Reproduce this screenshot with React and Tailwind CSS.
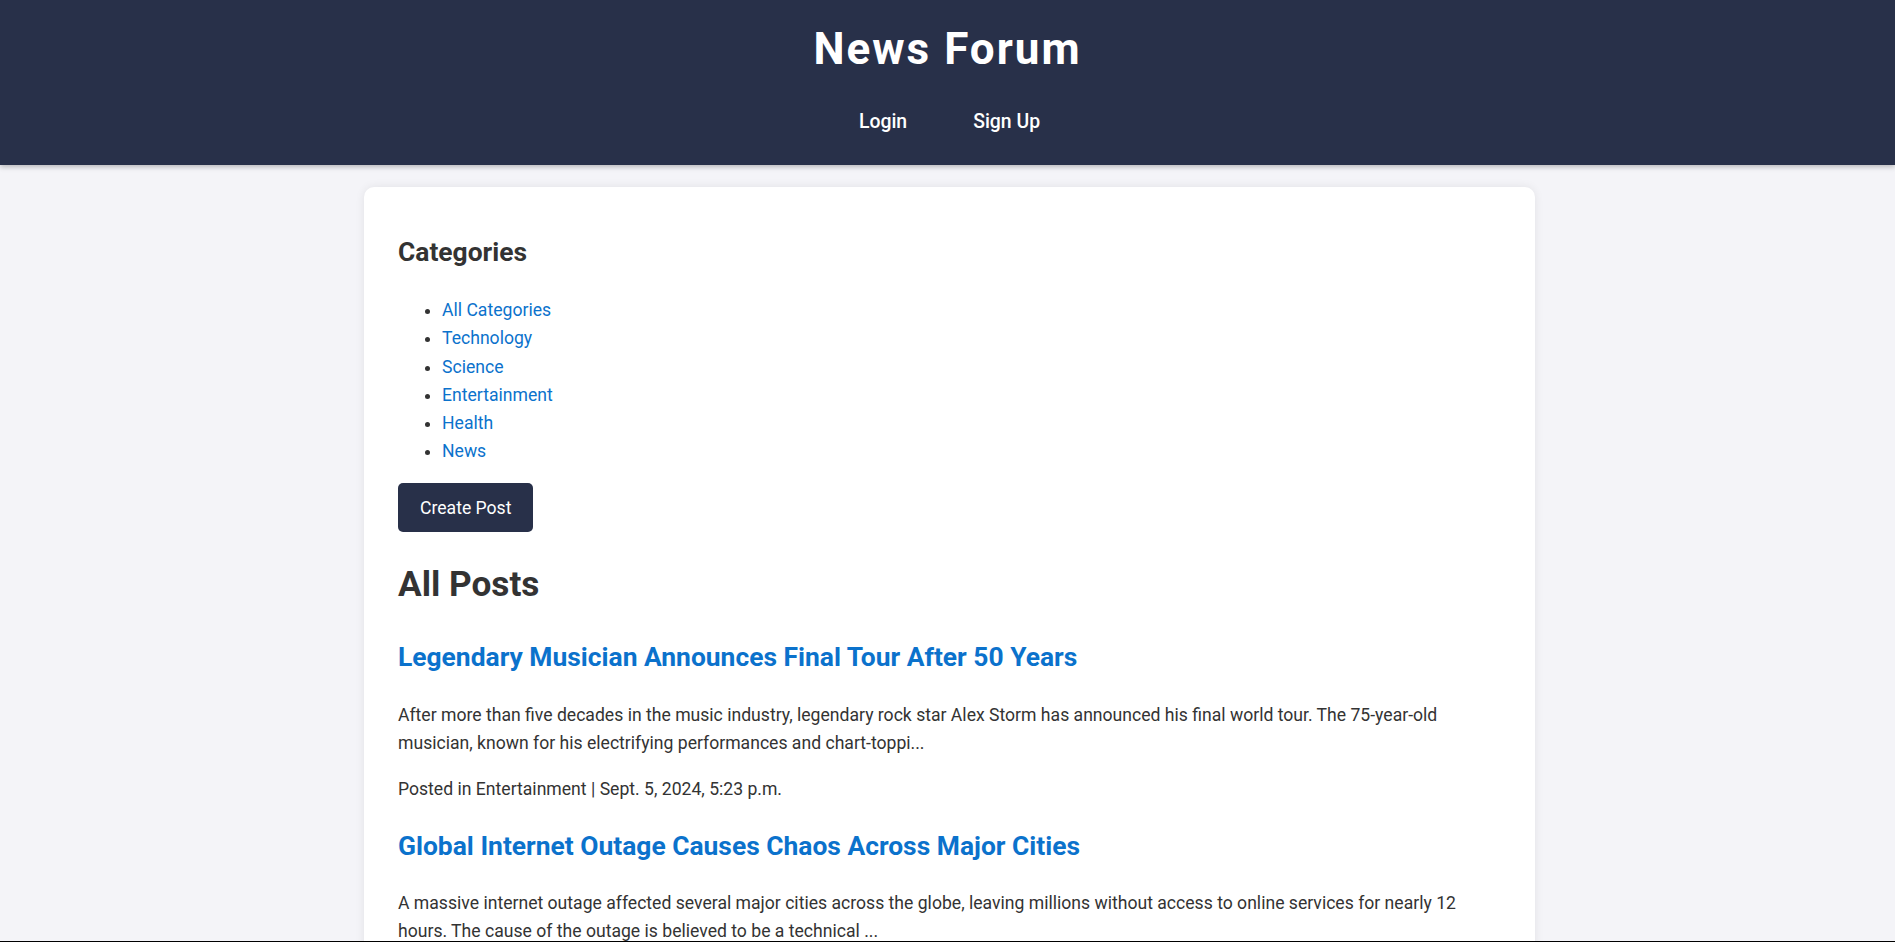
import React from "react";

const categories = ["All Categories", "Technology", "Science", "Entertainment", "Health", "News"];

const posts = [
  {
    title: "Legendary Musician Announces Final Tour After 50 Years",
    excerpt:
      "After more than five decades in the music industry, legendary rock star Alex Storm has announced his final world tour. The 75-year-old musician, known for his electrifying performances and chart-toppi...",
    category: "Entertainment",
    date: "Sept. 5, 2024, 5:23 p.m.",
  },
  {
    title: "Global Internet Outage Causes Chaos Across Major Cities",
    excerpt:
      "A massive internet outage affected several major cities across the globe, leaving millions without access to online services for nearly 12 hours. The cause of the outage is believed to be a technical ...",
    category: "Technology",
    date: "Sept. 5, 2024, 5:20 p.m.",
  },
];

const App = () => {
  return (
    <div className="min-h-screen bg-[#f4f4f8] text-[#333] text-[17.6px] leading-[1.6] font-['Roboto','Liberation_Sans',sans-serif]">
      <header className="h-[165px] bg-[#283049] pt-[14px] text-white text-center shadow-[0_2px_5px_rgba(0,0,0,0.25)]">
        <h1 className="text-[44px] leading-[70.4px] font-bold tracking-[2px]">News Forum</h1>
        <nav className="mt-[22px] pl-[4px] flex justify-center gap-[66px] text-[19.4px] leading-[31px] font-medium">
          <a href="#">Login</a>
          <a href="#">Sign Up</a>
        </nav>
      </header>

      <div className="pl-[4px]">
        <main className="mx-auto mt-[22px] w-[1171px] bg-white rounded-[10px] px-[34px] pt-[44px] pb-[40px] shadow-[0_0_10px_rgba(0,0,0,0.08)]">
          <h2 className="text-[26.4px] leading-[42.24px] font-bold">Categories</h2>
          <ul className="mt-[23px] mb-[18px] list-disc pl-[44px] marker:text-[#333]">
            {categories.map((cat, index) => (
              <li key={index} className="leading-[28.16px]">
                <a href="#" className="text-[#0b72cc]">
                  {cat}
                </a>
              </li>
            ))}
          </ul>
          <button className="h-[49px] px-[22px] bg-[#283049] text-white rounded-[5px] text-[17.6px]">
            Create Post
          </button>

          <h2 className="mt-[24px] text-[35.2px] leading-[56.3px] font-bold">All Posts</h2>
          <div className="mt-[24px]">
            {posts.map((post, index) => (
              <div key={index} className={index > 0 ? "mt-[22px]" : ""}>
                <h3 className="text-[26.4px] leading-[42.24px] font-bold text-[#0b72cc]">
                  <a href="#">{post.title}</a>
                </h3>
                <p className="mt-[22px] leading-[28.16px]">{post.excerpt}</p>
                <p className="mt-[17.6px] leading-[28.16px]">
                  Posted in {post.category} | {post.date}
                </p>
              </div>
            ))}
          </div>
        </main>
      </div>
      <div className="fixed bottom-0 left-0 right-0 h-px bg-black"></div>
    </div>
  );
};

export default App;
